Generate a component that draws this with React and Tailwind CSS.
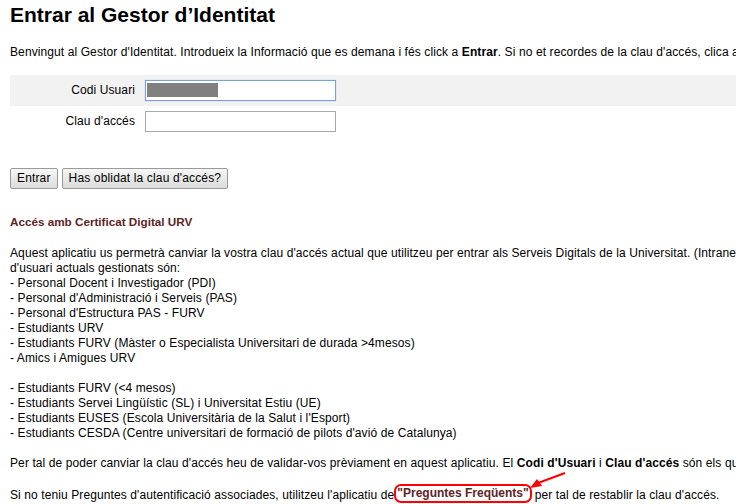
import React from 'react';

const items1 = [
  "- Personal Docent i Investigador (PDI)",
  "- Personal d'Administració i Serveis (PAS)",
  "- Personal d'Estructura PAS - FURV",
  "- Estudiants URV",
  "- Estudiants FURV (Màster o Especialista Universitari de durada >4mesos)",
  "- Amics i Amigues URV",
];

const items2 = [
  "- Estudiants FURV (<4 mesos)",
  "- Estudiants Servei Lingüístic (SL) i Universitat Estiu (UE)",
  "- Estudiants EUSES (Escola Universitària de la Salut i l'Esport)",
  "- Estudiants CESDA (Centre universitari de formació de pilots d'avió de Catalunya)",
];

function FormRow({ label, shaded, focused, children }) {
  return (
    <div className={`flex items-center h-[31px] ${shaded ? 'bg-[#f2f2f2]' : ''}`}>
      <label className="w-[125px] text-right">{label}</label>
      <div className="ml-[10px]">
        <div
          className={`relative w-[191px] h-[21px] bg-white border ${
            focused ? 'border-[#7b9fdd] shadow-[0_0_1px_#9ebbea]' : 'border-[#a9a9a9]'
          }`}
        >
          {children}
        </div>
      </div>
    </div>
  );
}

export default function App() {
  return (
    <div className="w-[736px] h-[504px] overflow-hidden bg-white text-black font-['Liberation_Sans',Arial,sans-serif] text-[12px] leading-[15px] tracking-[0.1px]">
      <div className="w-[1200px] px-[10px] whitespace-nowrap">
        <h1 className="text-[21px] leading-[24px] font-bold tracking-normal pt-[3px]">Entrar al Gestor d’Identitat</h1>

        <p className="mt-[18px]">
          Benvingut al Gestor d'Identitat. Introdueix la Informació que es demana i fés click a <b>Entrar</b>. Si no et recordes de la clau d'accés, clica a "Has oblidat la clau d'accés?".
        </p>

        {/* Login form */}
        <div className="mt-[15px]">
          <FormRow label="Codi Usuari" shaded focused>
            <div className="absolute left-[1px] top-[2px] w-[71px] h-[14px] bg-[#808080]" />
          </FormRow>
          <FormRow label="Clau d'accés" />
        </div>

        <div className="mt-[31px] flex gap-[4px] tracking-[0.15px]">
          <button className="h-[21px] px-[6px] border border-[#9a9a9a] rounded-[2px] bg-gradient-to-b from-[#f6f6f6] to-[#dcdcdc]">
            Entrar
          </button>
          <button className="h-[21px] px-[6px] border border-[#9a9a9a] rounded-[2px] bg-gradient-to-b from-[#f6f6f6] to-[#dcdcdc]">
            Has oblidat la clau d'accés?
          </button>
        </div>

        <h2 className="mt-[25px] font-bold text-[11.7px] tracking-normal text-[#5e2424]">Accés amb Certificat Digital URV</h2>

        <div className="mt-[17px]">
          <p>
            Aquest aplicatiu us permetrà canviar la vostra clau d'accés actual que utilitzeu per entrar als Serveis Digitals de la Universitat. (Intranet, correu electrònic, Moodle...). Els col·lectius
            <br />
            d'usuari actuals gestionats són:
          </p>
          {items1.map((t) => (
            <div key={t}>{t}</div>
          ))}
          <div className="h-[15px]" />
          {items2.map((t) => (
            <div key={t}>{t}</div>
          ))}
        </div>

        <p className="mt-[15px]">
          Per tal de poder canviar la clau d'accés heu de validar-vos prèviament en aquest aplicatiu. El <b>Codi d'Usuari</b> i <b>Clau d'accés</b> són els que utilitzeu habitualment.
        </p>

        <p className="mt-[15px]">
          Si no teniu Preguntes d'autentificació associades, utilitzeu l'aplicatiu de
          {/* red annotation drawn round the link */}
          <span className="relative top-[-2px] inline-block border-2 border-[#ff0000] rounded-[7px] px-[1px] leading-[15px] font-bold tracking-normal text-[#5e2424] mr-[3px]">
            "Preguntes Freqüents"
            <svg className="absolute right-[-38px] top-[-15px]" width="42" height="22" viewBox="0 0 42 22">
              <line x1="39" y1="2" x2="12" y2="12" stroke="#ff0000" strokeWidth="2" />
              <polygon points="4,17 11,8 16,15" fill="#ff0000" />
            </svg>
          </span>
          per tal de restablir la clau d'accés.
        </p>
      </div>
    </div>
  );
}
